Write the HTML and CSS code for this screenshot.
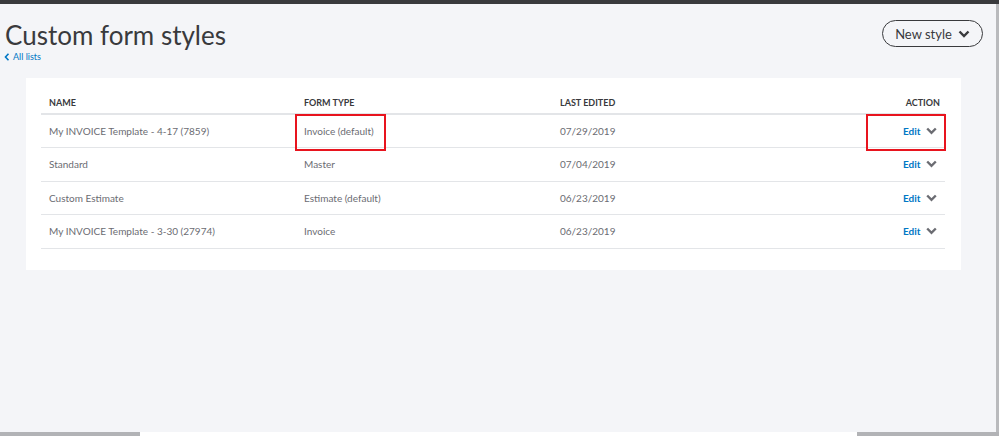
FILE: index.html
```html
<!DOCTYPE html>
<html lang="en">
<head>
    <meta charset="UTF-8">
    <title>Custom form styles</title>
    <link rel="stylesheet" href="styles.css">
</head>
<body>

    <div class="topbar"></div>

    <div class="page">
        <div class="content">
            <div class="page-head">
                <div class="titles">
                    <h1 class="title">Custom form styles</h1>
                    <a class="back" href="#">
                        <svg width="6" height="8" viewBox="0 0 6 8"><path d="M4.5 0.8 L1.5 4 L4.5 7.2" fill="none" stroke="#0077c5" stroke-width="1.6"/></svg>
                        All lists
                    </a>
                </div>
                <button class="new-style">New style
                    <svg width="12" height="8" viewBox="0 0 12 8"><path d="M1.5 1.5 L6 6 L10.5 1.5" fill="none" stroke="#393a3d" stroke-width="2.4"/></svg>
                </button>
            </div>

            <div class="card">
                <table class="styles">
                    <thead>
                        <tr>
                            <th class="col-name">Name</th>
                            <th class="col-type">Form type</th>
                            <th class="col-date">Last edited</th>
                            <th class="col-action">Action</th>
                        </tr>
                    </thead>
                    <tbody>
                        <tr>
                            <td>My INVOICE Template - 4-17 (7859)</td>
                            <td class="marked">Invoice (default)<span class="mark mark-type"></span></td>
                            <td>07/29/2019</td>
                            <td class="action marked">
                                <a href="#">Edit</a>
                                <svg class="caret" width="11" height="8" viewBox="0 0 11 8"><path d="M1.2 1.5 L5.5 5.8 L9.8 1.5" fill="none" stroke="#6b6c72" stroke-width="2.4"/></svg>
                                <span class="mark mark-action"></span>
                            </td>
                        </tr>
                        <tr>
                            <td>Standard</td>
                            <td>Master</td>
                            <td>07/04/2019</td>
                            <td class="action">
                                <a href="#">Edit</a>
                                <svg class="caret" width="11" height="8" viewBox="0 0 11 8"><path d="M1.2 1.5 L5.5 5.8 L9.8 1.5" fill="none" stroke="#6b6c72" stroke-width="2.4"/></svg>
                            </td>
                        </tr>
                        <tr>
                            <td>Custom Estimate</td>
                            <td>Estimate (default)</td>
                            <td>06/23/2019</td>
                            <td class="action">
                                <a href="#">Edit</a>
                                <svg class="caret" width="11" height="8" viewBox="0 0 11 8"><path d="M1.2 1.5 L5.5 5.8 L9.8 1.5" fill="none" stroke="#6b6c72" stroke-width="2.4"/></svg>
                            </td>
                        </tr>
                        <tr>
                            <td>My INVOICE Template - 3-30 (27974)</td>
                            <td>Invoice</td>
                            <td>06/23/2019</td>
                            <td class="action">
                                <a href="#">Edit</a>
                                <svg class="caret" width="11" height="8" viewBox="0 0 11 8"><path d="M1.2 1.5 L5.5 5.8 L9.8 1.5" fill="none" stroke="#6b6c72" stroke-width="2.4"/></svg>
                            </td>
                        </tr>
                    </tbody>
                </table>
            </div>
        </div>
        <div class="edge"></div>
    </div>

    <div class="bottom">
        <div class="bar bar-left"></div>
        <div class="gap"></div>
        <div class="bar bar-right"></div>
    </div>

</body>
</html>
```

FILE: styles.css
```css
* {
    padding: 0;
    margin: 0;
    box-sizing: border-box;
}

body {
    width: 999px;
    height: 436px;
    display: flex;
    flex-direction: column;
    font-family: Lato, "Open Sans", sans-serif;
    background-color: #f4f5f8;
    color: #393a3d;
    overflow: hidden;
}

.topbar {
    height: 4px;
    background-color: #393a3d;
}

.page {
    flex: 1;
    display: flex;
}

.content {
    flex: 1;
}

.edge {
    width: 3px;
    background-color: #b9babd;
}

.page-head {
    display: flex;
    justify-content: space-between;
    align-items: flex-start;
    padding: 15px 13px 0 5px;
}

.title {
    font-size: 26px;
    font-weight: 400;
    line-height: 32px;
}

.back {
    display: flex;
    align-items: center;
    gap: 3px;
    margin-left: -1px;
    font-size: 9px;
    color: #0077c5;
    text-decoration: none;
    line-height: 12px;
}

.new-style {
    margin-top: 1px;
    width: 101px;
    height: 27px;
    border: 1.5px solid #393a3d;
    border-radius: 14px;
    background: transparent;
    font-family: Lato, "Open Sans", sans-serif;
    font-size: 13px;
    color: #393a3d;
    display: flex;
    align-items: center;
    justify-content: center;
    gap: 6px;
}

.card {
    margin: 15px 35px 0 26px;
    height: 192px;
    background-color: #ffffff;
    padding: 13px 16px 0 15px;
}

.styles {
    width: 100%;
    border-collapse: collapse;
    font-size: 10px;
    color: #6b6c72;
}

.styles th {
    text-align: left;
    font-size: 9px;
    font-weight: 700;
    text-transform: uppercase;
    color: #393a3d;
    height: 23px;
    padding: 0 8px;
    border-bottom: 2px solid #e3e5e8;
}

.col-name {
    width: 255px;
}

.col-type {
    width: 256px;
}

.styles th.col-action {
    text-align: right;
    padding-right: 5px;
}

.styles td {
    height: 33.5px;
    padding: 0 8px;
    border-bottom: 1px solid #e3e5e8;
}

.styles td.action {
    text-align: right;
    padding-right: 8px;
    white-space: nowrap;
}

.action a {
    color: #0077c5;
    font-weight: 700;
    text-decoration: none;
    margin-right: 3px;
}

.caret {
    vertical-align: 0;
}

.marked {
    position: relative;
}

.mark {
    position: absolute;
    border: 2px solid #e8141e;
}

.mark-type {
    left: -1px;
    top: -1px;
    width: 91px;
    height: 37px;
}

.mark-action {
    right: -1px;
    top: -1px;
    width: 80px;
    height: 37px;
}

.bottom {
    height: 4px;
    display: flex;
}

.bar {
    background-color: #b2b3b6;
}

.bar-left {
    width: 140px;
}

.gap {
    flex: 1;
    background-color: #ffffff;
}

.bar-right {
    width: 142px;
}
```
